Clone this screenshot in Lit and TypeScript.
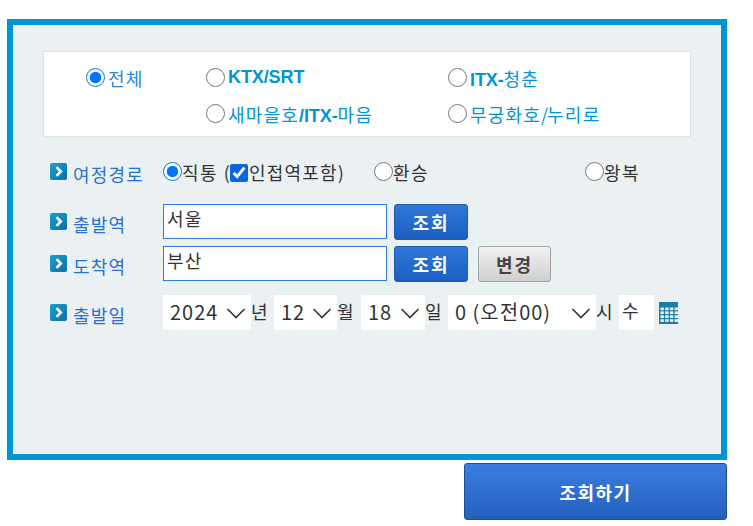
import { LitElement, html, css, svg } from "lit";
import { customElement } from "lit/decorators.js";

const arrow = html`<svg class="arrow" width="17" height="17" viewBox="0 0 17 17" aria-hidden="true">
  <defs><linearGradient id="ag" x1="0" y1="0" x2="1" y2="1"><stop offset="0" stop-color="#1a9fd0"/><stop offset="1" stop-color="#0f6fa6"/></linearGradient></defs>
  <rect width="17" height="17" rx="2" fill="url(#ag)"/>
  <path d="M6.5 4.2 10.8 8.5 6.5 12.8" fill="none" stroke="#fff" stroke-width="2.6"/>
</svg>`;

const chevron = html`<svg class="chev" width="20" height="12" viewBox="0 0 20 12" aria-hidden="true"><path d="M1.5 2 10 10.5 18.5 2" fill="none" stroke="#333" stroke-width="1.6"/></svg>`;

const cells = [];
for (let y = 0; y < 4; y++) for (let x = 0; x < 4; x++) cells.push(svg`<rect x="${1.5 + x * 4.7}" y="${5.5 + y * 3.9}" width="3.4" height="2.7" fill="#e8f2f6"/>`);
const calendar = html`<svg class="cal" width="19" height="22" viewBox="0 0 19 22" aria-hidden="true"><rect width="19" height="22" fill="#1a7ea8"/>${cells}</svg>`;

@customElement("app-root")
export class AppRoot extends LitElement {
  static styles = css`
    :host { display: block; width: 753px; height: 526px; overflow: hidden; background: #fff; font-family: "Noto Sans CJK KR", "Liberation Sans", sans-serif; font-size: 18px; letter-spacing: 1.2px; color: #333; white-space: nowrap; }
    * { box-sizing: border-box; }
    input, select, button { font-family: inherit; margin: 0; }
    .panel { margin: 19px 0 0 7px; width: 720px; height: 441px; border: 6px solid #0095d4; background: #ebf0f2; padding: 26px 30px 0; }
    .kinds { width: 648px; height: 86px; background: #fff; border: 1px solid #dfe3e5; display: grid; grid-template-columns: 120px 242px 1fr; grid-template-rows: 36px 36px; padding: 7px 0 0 42px; color: #0095d4; }
    .kinds label { display: flex; align-items: center; height: 36px; }
    .kinds label > span, .kinds .all { padding-top: 1px; }
    .kinds .all { color: #2a8ad8; }
    .kinds .bl { font-family: "Liberation Sans", sans-serif; font-weight: 700; letter-spacing: -0.1px; }
    .kinds .sl { letter-spacing: -1px; }
    .kinds .r { margin-right: 3px; }
    .r { appearance: auto; width: 19px; height: 19px; flex: none; accent-color: #0075ff; }
    .row { display: flex; align-items: center; }
    .head { width: 120px; display: flex; align-items: center; gap: 6px; color: #2a70cf; flex: none; padding-left: 7px; }
    .arrow { flex: none; margin-top: -1px; }
    .head span { margin-top: 4px; }
    .route { margin-top: 17px; height: 36px; }
    .route label { display: flex; align-items: center; flex: none; letter-spacing: 1.5px; }
    .route .r { margin-top: -2px; }
    .direct { width: 67px; }
    .route .chkl { width: 144px; letter-spacing: 1.2px; }
    .chk { width: 18px; height: 18px; margin: 2px 1px 0 0; accent-color: #0a66e0; }
    .transfer { width: 211px; }
    .from { margin-top: 14px; height: 35px; }
    .to { margin-top: 7px; height: 35px; }
    .date { margin-top: 14px; height: 35px; }
    .station { width: 224px; height: 35px; border: 1px solid #2b7de0; background: #fff; padding: 0 3px 8px; font-size: 18px; letter-spacing: 1.2px; color: #333; border-radius: 0; outline: none; }
    .btn { height: 36px; width: 74px; border-radius: 3px; font-size: 18px; font-weight: 700; letter-spacing: 2px; cursor: pointer; }
    .blue { margin-left: 7px; color: #fff; border: 1px solid #1c5fb0; background: linear-gradient(#3177d8, #1c5fc0); }
    .gray { margin-left: 10px; color: #444; border: 1px solid #a3a3a3; background: linear-gradient(#f2f2f2, #cfcfcf); width: 73px; }
    .sel { position: relative; display: block; height: 35px; flex: none; }
    .sel select { appearance: none; -webkit-appearance: none; width: 100%; height: 35px; border: 0; border-radius: 0; background: #fff; font-size: 20px; color: #333; padding: 0 0 3px 7px; outline: none; letter-spacing: 1px; }
    .chev { position: absolute; right: 5px; top: 12px; pointer-events: none; }
    .unit { flex: none; padding-bottom: 4px; letter-spacing: 0; }
    .y { width: 88px; }
    .m { width: 63px; }
    .d { width: 64px; }
    .h { width: 148px; }
    .u1 { width: 23px; }
    .u2 { width: 24px; }
    .u3 { width: 23px; }
    .u4 { width: 23px; }
    .hour { width: 35px; height: 35px; border: 0; background: #fff; font-size: 18px; color: #333; padding: 0 3px 6px; border-radius: 0; outline: none; }
    .cal { margin-left: 5px; flex: none; }
    .foot { display: flex; justify-content: flex-end; width: 727px; margin-top: 3px; }
    .go { width: 263px; height: 57px; border-radius: 3px; border: 1px solid #1c4f96; background: linear-gradient(#3a7de0, #2461bd); color: #fff; font-size: 18px; font-weight: 700; letter-spacing: 1.5px; }
  `;

  render() {
    return html`
      <div class="panel">
        <div class="kinds">
          <label class="all"><input class="r" type="radio" name="k" checked />전체</label>
          <label><input class="r" type="radio" name="k" /><span class="bl">KTX/SRT</span></label>
          <label><input class="r" type="radio" name="k" /><span><span class="bl">ITX-</span>청춘</span></label>
          <span></span>
          <label><input class="r" type="radio" name="k" /><span>새마을호<span class="bl">/ITX-</span>마음</span></label>
          <label><input class="r" type="radio" name="k" /><span>무궁화호<span class="sl">/</span>누리로</span></label>
        </div>
        <div class="row route">
          <div class="head">${arrow}<span>여정경로</span></div>
          <label class="direct"><input class="r" type="radio" name="t" checked />직통 (</label>
          <label class="chkl"><input class="chk" type="checkbox" checked />인접역포함)</label>
          <label class="transfer"><input class="r" type="radio" name="t" />환승</label>
          <label><input class="r" type="radio" name="t" />왕복</label>
        </div>
        <div class="row from">
          <div class="head">${arrow}<span>출발역</span></div>
          <input class="station" .value=${"서울"} />
          <button class="btn blue">조회</button>
        </div>
        <div class="row to">
          <div class="head">${arrow}<span>도착역</span></div>
          <input class="station" .value=${"부산"} />
          <button class="btn blue">조회</button>
          <button class="btn gray">변경</button>
        </div>
        <div class="row date">
          <div class="head">${arrow}<span>출발일</span></div>
          <label class="sel y"><select><option>2024</option></select>${chevron}</label><span class="unit u1">년</span>
          <label class="sel m"><select><option>12</option></select>${chevron}</label><span class="unit u2">월</span>
          <label class="sel d"><select><option>18</option></select>${chevron}</label><span class="unit u3">일</span>
          <label class="sel h"><select><option>0 (오전00)</option></select>${chevron}</label><span class="unit u4">시</span>
          <input class="hour" .value=${"수"} />
          ${calendar}
        </div>
      </div>
      <div class="foot"><button class="go">조회하기</button></div>
    `;
  }
}
